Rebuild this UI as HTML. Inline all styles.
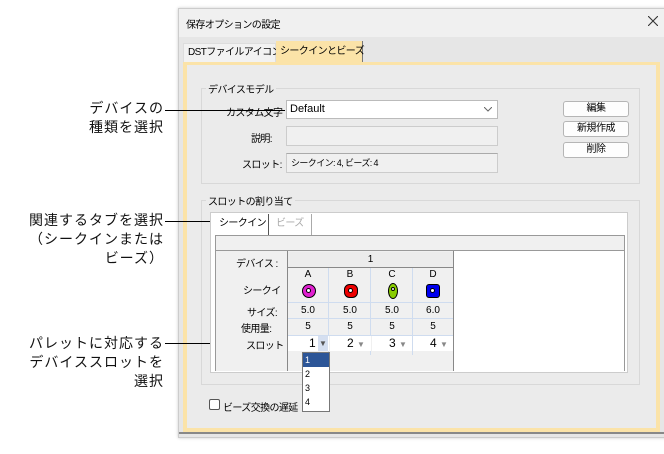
<!DOCTYPE html>
<html><head><meta charset="utf-8"><style>
*{box-sizing:border-box;margin:0;padding:0}
body{width:664px;height:454px;background:#fff;position:relative;overflow:hidden;font-family:"Liberation Sans","Noto Sans CJK JP",sans-serif;font-size:10px;color:#000}
.a{position:absolute;white-space:nowrap}
.j{letter-spacing:-0.6px}
.ann{position:absolute;right:500px;text-align:right;font-size:14px;line-height:19px;letter-spacing:1px;color:#111;white-space:nowrap}
.ln{position:absolute;height:1px;background:#000}
.btn{position:absolute;left:563px;width:66px;height:16px;border:1px solid #b5b5b5;border-radius:3px;background:#fdfdfd;text-align:center;line-height:14px;letter-spacing:-0.5px}
.grp{position:absolute;border:1px solid #d8d8d8}
.lbl{position:absolute;background:#ebebeb;padding:0 2px;top:-8px;left:4px;white-space:nowrap;letter-spacing:-0.6px}
.col{position:absolute;top:268px;width:41px;height:87px;border-right:1px solid #cfdcef}
.c{position:absolute;width:100%;text-align:center}
</style></head><body>
<div class="ann" style="top:99px">デバイスの<br>種類を選択</div>
<div class="ann" style="top:211px">関連するタブを選択<br>（シークインまたは<br>ビーズ）</div>
<div class="ann" style="top:334px">パレットに対応する<br>デバイススロットを<br>選択</div>

<div class="a" style="left:178px;top:8px;width:490px;height:430px;background:#f0f0f0;border:1px solid #ccc;box-shadow:0 0 3px #ccc"></div>
<div class="a j" style="left:186px;top:16px">保存オプションの設定</div>
<svg class="a" style="left:648px;top:16px" width="10" height="10"><path d="M0 0L10 10M10 0L0 10" stroke="#333" stroke-width="1.1"/></svg>
<div class="a" style="left:179px;top:37px;width:485px;height:400px;background:#e6e6e6"></div>
<div class="a j" style="left:183px;top:43px;width:93px;height:20px;background:#f2f2f2;border:1px solid #ddd;line-height:18px;padding-left:4px">DSTファイルアイコン</div>
<div class="a j" style="left:276px;top:41px;width:87px;height:22px;background:#fbe3a8;border-right:1px solid #777;line-height:22px;padding-left:4px">シークインとビーズ</div>
<div class="a" style="left:183px;top:62px;width:477px;height:370px;background:#ebebeb;border:4px solid #fbe3a8;border-top-width:3px"></div>
<div class="a" style="left:179px;top:432px;width:485px;height:2px;background:#888"></div>

<div class="grp" style="left:201px;top:88px;width:439px;height:96px"><span class="lbl">デバイスモデル</span></div>
<div class="a j" style="left:226px;top:104px">カスタム文字</div>
<div class="a" style="left:286px;top:100px;width:212px;height:19px;background:#fff;border:1px solid #bbb;line-height:17px;padding-left:3px;font-size:11px">Default<svg class="a" style="right:5px;top:6px" width="8" height="5"><path d="M0 0L4 4L8 0" stroke="#666" fill="none"/></svg></div>
<div class="a j" style="left:251px;top:130px">説明:</div>
<div class="a" style="left:286px;top:126px;width:212px;height:20px;background:#f0f0f0;border:1px solid #ccc"></div>
<div class="a j" style="left:242px;top:156px">スロット:</div>
<div class="a j" style="left:286px;top:153px;width:212px;height:20px;background:#f0f0f0;border:1px solid #ccc;border-top-color:#aaa;line-height:18px;padding-left:4px;font-size:9px">シークイン: 4, ビーズ: 4</div>
<div class="btn" style="top:101px">編集</div>
<div class="btn" style="top:121px">新規作成</div>
<div class="btn" style="top:142px">削除</div>
<div class="ln" style="left:165px;top:110px;width:120px"></div>

<div class="grp" style="left:201px;top:200px;width:439px;height:185px"><span class="lbl">スロットの割り当て</span></div>
<div class="a" style="left:210px;top:212px;width:418px;height:161px;background:#fff;border:1px solid #ccc"></div>
<div class="a j" style="left:216px;top:214px;width:53px;height:22px;border-right:1px solid #555;line-height:20px;padding-left:3px">シークイン</div>
<div class="a j" style="left:274px;top:214px;width:38px;height:22px;border-right:1px solid #aaa;line-height:20px;padding-left:2px;color:#aaa">ビーズ</div>
<div class="a" style="left:215px;top:235px;width:410px;height:136px;background:#f0f0f0;border:1px solid #999;border-bottom:none"></div>
<div class="a" style="left:216px;top:250px;width:408px;height:1px;background:#999"></div>
<div class="a" style="left:453px;top:251px;width:171px;height:120px;background:#fff"></div>
<div class="a" style="left:287px;top:251px;width:167px;height:120px;border-left:1px solid #888;border-right:1px solid #888"></div>
<div class="a" style="left:288px;top:252px;width:165px;height:16px;background:#ececec;border-bottom:1px solid #888;text-align:center;line-height:15px">1</div>
<div class="a j" style="left:236px;top:255px">デバイス :</div>
<div class="a j" style="left:243px;top:282px">シークイ</div>
<div class="a j" style="left:247px;top:304px">サイズ:</div>
<div class="a j" style="left:241px;top:320px">使用量:</div>
<div class="a j" style="left:246px;top:337px">スロット</div>

<div class="col" style="left:288px"><div class="c" style="top:1px">A</div><div class="a" style="left:14px;top:16px;width:14px;height:14px;border-radius:50%;background:#e020d0;border:1.5px solid #000"><div class="a" style="left:3px;top:3px;width:5px;height:5px;border-radius:50%;background:#fff;border:1px solid #000"></div></div><div class="c" style="top:37px">5.0</div><div class="c" style="top:53px">5</div></div>
<div class="col" style="left:330px"><div class="c" style="top:1px">B</div><div class="a" style="left:14px;top:16px;width:14px;height:14px;border-radius:40%;background:#e00;border:1.5px solid #000"><div class="a" style="left:3px;top:3px;width:5px;height:5px;border-radius:50%;background:#fff;border:1px solid #000"></div></div><div class="c" style="top:37px">5.0</div><div class="c" style="top:53px">5</div></div>
<div class="col" style="left:372px"><div class="c" style="top:1px">C</div><div class="a" style="left:16px;top:15px;width:10px;height:16px;border-radius:50%;background:#8c0;border:1.5px solid #000"><div class="a" style="left:2px;top:3px;width:4px;height:4px;border-radius:50%;background:#fff;border:1px solid #000"></div></div><div class="c" style="top:37px">5.0</div><div class="c" style="top:53px">5</div></div>
<div class="col" style="left:413px;width:40px;border-right:none"><div class="c" style="top:1px">D</div><div class="a" style="left:13px;top:16px;width:14px;height:14px;border-radius:3px;background:#00e;border:1.5px solid #000"><div class="a" style="left:3px;top:3px;width:5px;height:5px;border-radius:50%;background:#fff;border:1px solid #000"></div></div><div class="c" style="top:37px">6.0</div><div class="c" style="top:53px">5</div></div>
<div class="a" style="left:288px;top:302px;width:165px;height:1px;background:#cfdcef"></div>
<div class="a" style="left:288px;top:318px;width:165px;height:1px;background:#cfdcef"></div>
<div class="a" style="left:288px;top:335px;width:165px;height:1px;background:#cfdcef"></div>
<div class="a" style="left:288px;top:336px;width:41px;height:15px;background:#fff;font-size:12px;line-height:15px;padding-left:21px">1<span style="position:absolute;left:30px;top:0;width:10px;height:15px;background:#d5dff0;font-size:8px;color:#555;text-align:center">▼</span></div>
<div class="a" style="left:330px;top:336px;width:41px;height:15px;background:#fff;font-size:12px;line-height:15px;padding-left:17px">2 <span style="font-size:8px;color:#888">▼</span></div>
<div class="a" style="left:372px;top:336px;width:40px;height:15px;background:#fff;font-size:12px;line-height:15px;padding-left:17px">3 <span style="font-size:8px;color:#888">▼</span></div>
<div class="a" style="left:413px;top:336px;width:40px;height:15px;background:#fff;font-size:12px;line-height:15px;padding-left:17px">4 <span style="font-size:8px;color:#888">▼</span></div>
<div class="ln" style="left:165px;top:221px;width:45px"></div>
<div class="ln" style="left:165px;top:343px;width:45px"></div>

<div class="a" style="left:209px;top:399px;width:11px;height:11px;border:1px solid #555;border-radius:2px;background:#fff"></div>
<div class="a j" style="left:223px;top:399px">ビーズ交換の遅延</div>

<div class="a" style="left:302px;top:352px;width:28px;height:60px;background:#fff;border:1px solid #777;font-size:9px;line-height:14px">
<div style="background:#2c5597;color:#fff;padding-left:2px">1</div><div style="padding-left:2px">2</div><div style="padding-left:2px">3</div><div style="padding-left:2px">4</div></div>
</body></html>
